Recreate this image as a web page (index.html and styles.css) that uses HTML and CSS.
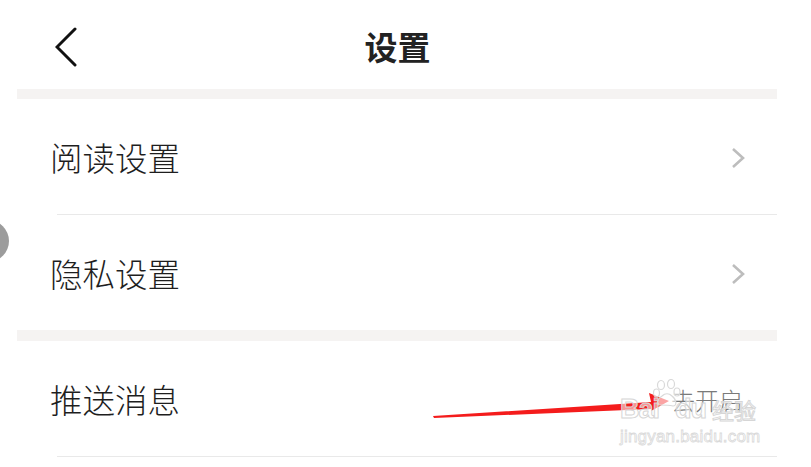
FILE: index.html
```html
<!DOCTYPE html>
<html lang="zh">
<head>
<meta charset="utf-8">
<link rel="stylesheet" href="styles.css">
</head>
<body>
<div class="page">
  <header class="topbar">
    <svg class="back" width="24" height="40" viewBox="0 0 24 40"><polyline points="20,2 2,20 20,38" fill="none" stroke="#111" stroke-width="3" stroke-linecap="round" stroke-linejoin="miter"/></svg>
    <h1 class="title">设置</h1>
  </header>
  <div class="list">
    <div class="band"></div>
    <div class="row"><span class="label">阅读设置</span><svg class="chev" width="16" height="22" viewBox="0 0 16 22"><polyline points="3,2 13,11 3,20" fill="none" stroke="#bdbdbd" stroke-width="2.6"/></svg></div>
    <div class="divider"></div>
    <div class="row"><span class="label">隐私设置</span><svg class="chev" width="16" height="22" viewBox="0 0 16 22"><polyline points="3,2 13,11 3,20" fill="none" stroke="#bdbdbd" stroke-width="2.6"/></svg></div>
    <div class="band band2"></div>
    <div class="row"><span class="label">推送消息</span><span class="value">去开启</span></div>
    <div class="divider"></div>
  </div>
  <div class="fab"></div>
  <svg class="arrow" width="811" height="467" viewBox="0 0 811 467"><polygon points="433,416 651,402 649,393 669,401 651,411 651,409 434,418" fill="#f41c1c"/></svg>
  <div class="watermark">
    <div class="wm-top"><span class="wm-bai">Bai</span><svg class="paw" width="30" height="30" viewBox="0 0 30 30"><g fill="rgba(255,255,255,0.6)" stroke="#d9d9d9" stroke-width="1.2"><ellipse cx="8" cy="6" rx="3.5" ry="4.5"/><ellipse cx="18" cy="5" rx="3.5" ry="4.5"/><ellipse cx="3.5" cy="14" rx="3" ry="4"/><ellipse cx="24" cy="13" rx="3" ry="4"/><path d="M6 26 C3 26 4 20 9 17 C12 14 16 14 19 17 C24 21 24 27 20 27 C16 26 11 26 6 26 Z"/></g></svg><span class="wm-du">du</span><span class="wm-jy">经验</span></div>
    <div class="wm-url">jingyan.baidu.com</div>
  </div>
</div>
</body>
</html>
```

FILE: styles.css
```css
* { box-sizing: border-box; }
html, body { margin: 0; padding: 0; background: #fff; }
body {
  font-family: "Noto Sans CJK SC", "Noto Sans", sans-serif;
  color: #222;
  width: 811px;
  height: 467px;
  overflow: hidden;
}
.page { position: relative; width: 811px; height: 467px; }
.topbar {
  height: 89px;
  display: flex;
  align-items: center;
  position: relative;
  padding-left: 55px;
}
.back { display: block; margin-top: 5px; }
.title {
  position: absolute;
  left: 0;
  right: 16px;
  top: 24px;
  margin: 0;
  text-align: center;
  font-size: 33px;
  font-weight: 700;
  line-height: 44px;
  color: #222;
}
.list { margin: 0 34px 0 17px; }
.band { height: 10px; background: #f5f3f2; }
.band2 { height: 11px; }
.row {
  height: 115px;
  display: flex;
  align-items: center;
  justify-content: space-between;
  padding: 0 31px 0 33px;
}
.label { font-size: 32.5px; line-height: 40px; color: #1e1e1e; font-weight: 300; }
.chev { display: block; margin-top: 2px; }
.value { font-size: 24px; color: #7a7a7a; margin-right: 3px; margin-top: 2px; font-weight: 300; }
.divider { height: 1px; background: #e9e9e9; margin-left: 40px; }
.fab {
  position: absolute;
  left: -33px;
  top: 220px;
  width: 42px;
  height: 42px;
  border-radius: 50%;
  background: #9c9c9c;
}
.arrow { position: absolute; left: 0; top: 0; pointer-events: none; }
.watermark {
  position: absolute;
  left: 620px;
  top: 378px;
  width: 150px;
  font-family: "Liberation Sans", Arial, sans-serif;
  pointer-events: none;
}
.wm-top { display: flex; align-items: flex-end; height: 45px; }
.wm-bai, .wm-du {
  font-size: 27px;
  font-weight: 700;
  color: rgba(255,255,255,0.55);
  -webkit-text-stroke: 1px #d6d6d6;
  line-height: 28px;
  letter-spacing: -1px;
}
.paw { display: block; margin: 0 -8px 14px -6px; }
.wm-jy {
  font-family: "Noto Sans CJK SC", sans-serif;
  font-size: 22px;
  color: rgba(255,255,255,0.5);
  -webkit-text-stroke: 1px #d6d6d6;
  line-height: 28px;
  margin-left: 6px;
}
.wm-url {
  font-size: 17px;
  color: rgba(255,255,255,0.5);
  -webkit-text-stroke: 0.8px #d9d9d9;
  line-height: 20px;
  margin-top: 4px;
  letter-spacing: 0.2px;
}
```
